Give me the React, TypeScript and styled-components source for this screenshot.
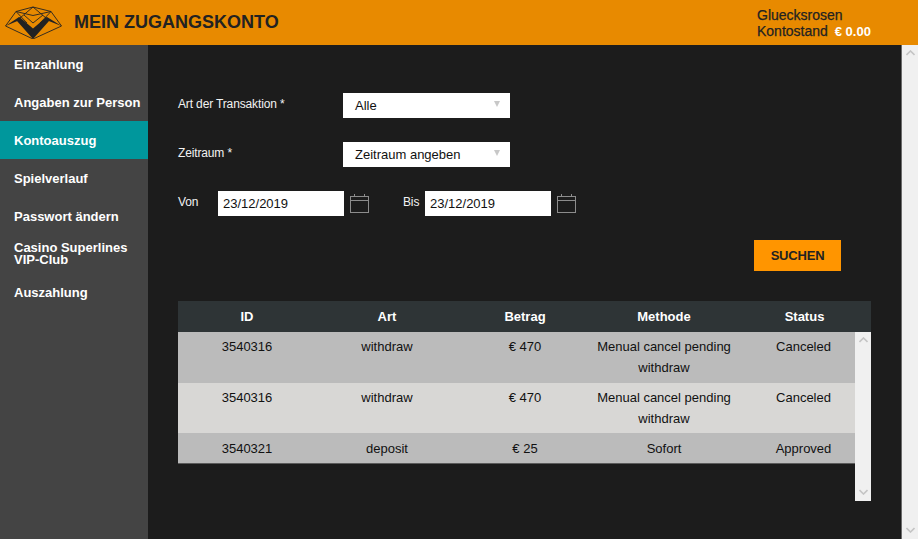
import React from "react";
import styled, { createGlobalStyle } from "styled-components";

const Global = createGlobalStyle`
  html, body { margin: 0; padding: 0; height: 100%; overflow: hidden; }
  body { font-family: "Liberation Sans", Arial, sans-serif; background: #1c1c1c; }
  #root { height: 100%; }
`;

const Page = styled.div`
  display: flex;
  width: 918px;
  height: 539px;
  overflow: hidden;
`;
const Content = styled.div`
  width: 902px;
  flex: none;
  display: flex;
  flex-direction: column;
`;
const Header = styled.header`
  width: 918px;
  height: 45px;
  flex: none;
  background: #e88a00;
  display: flex;
  align-items: center;
  padding: 0 47px 0 5px;
  box-sizing: border-box;
`;
const Title = styled.h1`
  margin: 0 0 0 12px;
  font-size: 18px;
  font-weight: 700;
  color: #222;
  flex: 1;
  padding-bottom: 1px;
`;
const Account = styled.div`
  width: 114px;
  font-size: 14px;
  font-weight: 400;
  line-height: 16px;
  white-space: nowrap;
  color: #222;
  -webkit-text-stroke: 0.25px #222;
  padding-top: 1px;
`;
const Balance = styled.span`
  color: #fff;
  font-weight: 700;
  margin-left: 3px;
  font-size: 13px;
  -webkit-text-stroke: 0;
`;
const Columns = styled.div`
  display: flex;
  flex: 1;
  width: 902px;
`;
const Sidebar = styled.nav`
  width: 148px;
  flex: none;
  background: #444444;
`;
const NavItem = styled.div<{ $active?: boolean; $wrapped?: boolean }>`
  height: 38px;
  display: flex;
  align-items: center;
  padding: ${(p) => (p.$wrapped ? "0" : "2px")} 0 0 14px;
  box-sizing: border-box;
  font-size: 13px;
  font-weight: 700;
  line-height: 12px;
  color: #fff;
  background: ${(p) => (p.$active ? "#00979c" : "transparent")};
`;
const Main = styled.main`
  flex: 1;
  background: #1c1c1c;
  padding: 48px 30px 0;
  box-sizing: border-box;
  border-right: 1px solid #6b6b6b;
  display: flex;
  flex-direction: column;
`;
const FormRow = styled.div`
  display: flex;
  align-items: center;
  height: 25px;
  margin-bottom: 24px;
`;
const Label = styled.label<{ $width: number }>`
  width: ${(p) => p.$width}px;
  flex: none;
  font-size: 12px;
  letter-spacing: -0.14px;
  color: #f2f2f2;
  padding-bottom: 3px;
`;
const Select = styled.div`
  width: 167px;
  height: 25px;
  background: #fff;
  box-sizing: border-box;
  padding: 0 10px 0 12px;
  display: flex;
  align-items: center;
  justify-content: space-between;
  font-size: 13px;
  color: #111;
`;
const Caret = styled.span`
  width: 0;
  height: 0;
  border-left: 3px solid transparent;
  border-right: 3px solid transparent;
  border-top: 6px solid #c8c8c8;
  margin-bottom: 3px;
`;
const DateField = styled.div`
  width: 126px;
  height: 25px;
  background: #fff;
  box-sizing: border-box;
  padding-left: 5px;
  display: flex;
  align-items: center;
  font-size: 13px;
  color: #111;
`;
const CalendarSvg = styled.svg`
  width: 19px;
  height: 19px;
  margin: 0 34px 0 6px;
  flex: none;
  display: block;
`;
const Actions = styled.div`
  display: flex;
  justify-content: flex-end;
  padding-right: 30px;
  margin-bottom: 30px;
`;
const SearchButton = styled.button`
  width: 87px;
  height: 31px;
  border: 0;
  padding: 0;
  background: #ff9500;
  color: #222;
  font-family: inherit;
  font-size: 13px;
  font-weight: 700;
  letter-spacing: -0.2px;
`;
const Table = styled.section`
  width: 693px;
  display: flex;
  flex-direction: column;
`;
const HeadRow = styled.div`
  display: grid;
  grid-template-columns: 138px 142px 134px 144px 135px;
  height: 31px;
  align-items: center;
  background: #2e3436;
  color: #fff;
  font-size: 13px;
  font-weight: 700;
  text-align: center;
`;
const HeadCell = styled.div<{ $nudge?: boolean }>`
  padding-left: ${(p) => (p.$nudge ? "2px" : "0")};
`;
const BodyWrap = styled.div`
  display: flex;
  height: 169px;
`;
const Rows = styled.div`
  width: 677px;
`;
const Row = styled.div<{ $even?: boolean; $h: number; $last?: boolean }>`
  display: grid;
  grid-template-columns: 138px 142px 134px 144px 119px;
  height: ${(p) => p.$h}px;
  box-sizing: border-box;
  padding-top: ${(p) => (p.$last ? "5px" : "4px")};
  background: ${(p) => (p.$even ? "#d8d7d5" : "#bbbbbb")};
  border-bottom: ${(p) => (p.$last ? "1px solid #5a5a5a" : "0")};
  font-size: 13px;
  line-height: 21px;
  color: #111;
  text-align: center;
`;
const Cell = styled.div<{ $offset?: boolean }>`
  padding-left: ${(p) => (p.$offset ? "16px" : "0")};
  white-space: ${(p) => (p.$offset ? "nowrap" : "normal")};
`;
const InnerScrollbar = styled.div`
  width: 16px;
  background: #f0f0f0;
  display: flex;
  flex-direction: column;
  align-items: center;
  justify-content: space-between;
  padding: 5px 0 6px;
  box-sizing: border-box;
`;
const PageScrollbar = styled.div`
  width: 16px;
  flex: none;
  align-self: stretch;
  margin-top: 45px;
  background: #f0f0f0;
  display: flex;
  flex-direction: column;
  align-items: center;
  justify-content: space-between;
  padding: 5px 0 6px;
  box-sizing: border-box;
`;

const Chevron = ({ down }: { down?: boolean }) => (
  <svg width="9" height="6" viewBox="0 0 9 6" style={{ display: "block" }}>
    <path d={down ? "M0.5 1 L4.5 5 L8.5 1" : "M0.5 5 L4.5 1 L8.5 5"} fill="none" stroke="#c4c4c4" strokeWidth="1.6" />
  </svg>
);

const Calendar = () => (
  <CalendarSvg viewBox="0 0 19 19">
    <g fill="none" stroke="#8c8c8c" strokeWidth="1">
      <rect x="0.5" y="2.5" width="18" height="16" />
      <path d="M0.5 6.5 H18.5 M4.5 0 V3 M14.5 0 V3" />
    </g>
  </CalendarSvg>
);

const Logo = () => (
  <svg width="57" height="33" viewBox="5 4 57 33" style={{ display: "block", flex: "none" }}>
    <g fill="none" stroke="#222" strokeWidth="0.9" strokeLinejoin="round">
      <path d="M33 5 L16 9.5 L5.5 24 L33 37 L61.5 24 L51 9.5 Z" />
      <path d="M16 9.5 L33 13.5 L51 9.5 M33 5 L20 16 M33 5 L46 16 M16 9.5 L27 21 M51 9.5 L40 21 M24 13 L33 21 L43 13" />
    </g>
    <path d="M5.5 24 L19 15 L21 17.5 Z M61.5 24 L47 15 L45 17.5 Z" fill="#222" />
    <path d="M19.5 15 L33 26.5 L46.5 15 L49 19 L33 37 L17 19 Z" fill="#222" />
  </svg>
);

const nav = ["Einzahlung", "Angaben zur Person", "Kontoauszug", "Spielverlauf", "Passwort ändern", "Casino Superlines VIP-Club", "Auszahlung"];
const rows = [
  { id: "3540316", art: "withdraw", betrag: "€ 470", methode: "Menual cancel pending withdraw", status: "Canceled", h: 51 },
  { id: "3540316", art: "withdraw", betrag: "€ 470", methode: "Menual cancel pending withdraw", status: "Canceled", h: 50 },
  { id: "3540321", art: "deposit", betrag: "€ 25", methode: "Sofort", status: "Approved", h: 31 },
];

export default function App() {
  return (
    <Page>
      <Global />
      <Content>
        <Header>
          <Logo />
          <Title>MEIN ZUGANGSKONTO</Title>
          <Account>
            Gluecksrosen
            <br />
            Kontostand <Balance>€ 0.00</Balance>
          </Account>
        </Header>
        <Columns>
          <Sidebar>
            {nav.map((n) => (
              <NavItem key={n} $active={n === "Kontoauszug"} $wrapped={n.length > 20}>
                {n}
              </NavItem>
            ))}
          </Sidebar>
          <Main>
            <FormRow>
              <Label $width={165}>Art der Transaktion *</Label>
              <Select>
                Alle
                <Caret />
              </Select>
            </FormRow>
            <FormRow>
              <Label $width={165}>Zeitraum *</Label>
              <Select>
                Zeitraum angeben
                <Caret />
              </Select>
            </FormRow>
            <FormRow>
              <Label $width={40}>Von</Label>
              <DateField>23/12/2019</DateField>
              <Calendar />
              <Label $width={22}>Bis</Label>
              <DateField>23/12/2019</DateField>
              <Calendar />
            </FormRow>
            <Actions>
              <SearchButton>SUCHEN</SearchButton>
            </Actions>
            <Table>
              <HeadRow>
                <HeadCell>ID</HeadCell>
                <HeadCell>Art</HeadCell>
                <HeadCell>Betrag</HeadCell>
                <HeadCell>Methode</HeadCell>
                <HeadCell $nudge>Status</HeadCell>
              </HeadRow>
              <BodyWrap>
                <Rows>
                  {rows.map((r, i) => (
                    <Row key={i} $even={i === 1} $h={r.h} $last={i === 2}>
                      <Cell>{r.id}</Cell>
                      <Cell>{r.art}</Cell>
                      <Cell>{r.betrag}</Cell>
                      <Cell>{r.methode}</Cell>
                      <Cell $offset>{r.status}</Cell>
                    </Row>
                  ))}
                </Rows>
                <InnerScrollbar>
                  <Chevron />
                  <Chevron down />
                </InnerScrollbar>
              </BodyWrap>
            </Table>
          </Main>
        </Columns>
      </Content>
      <PageScrollbar>
        <Chevron />
        <Chevron down />
      </PageScrollbar>
    </Page>
  );
}
